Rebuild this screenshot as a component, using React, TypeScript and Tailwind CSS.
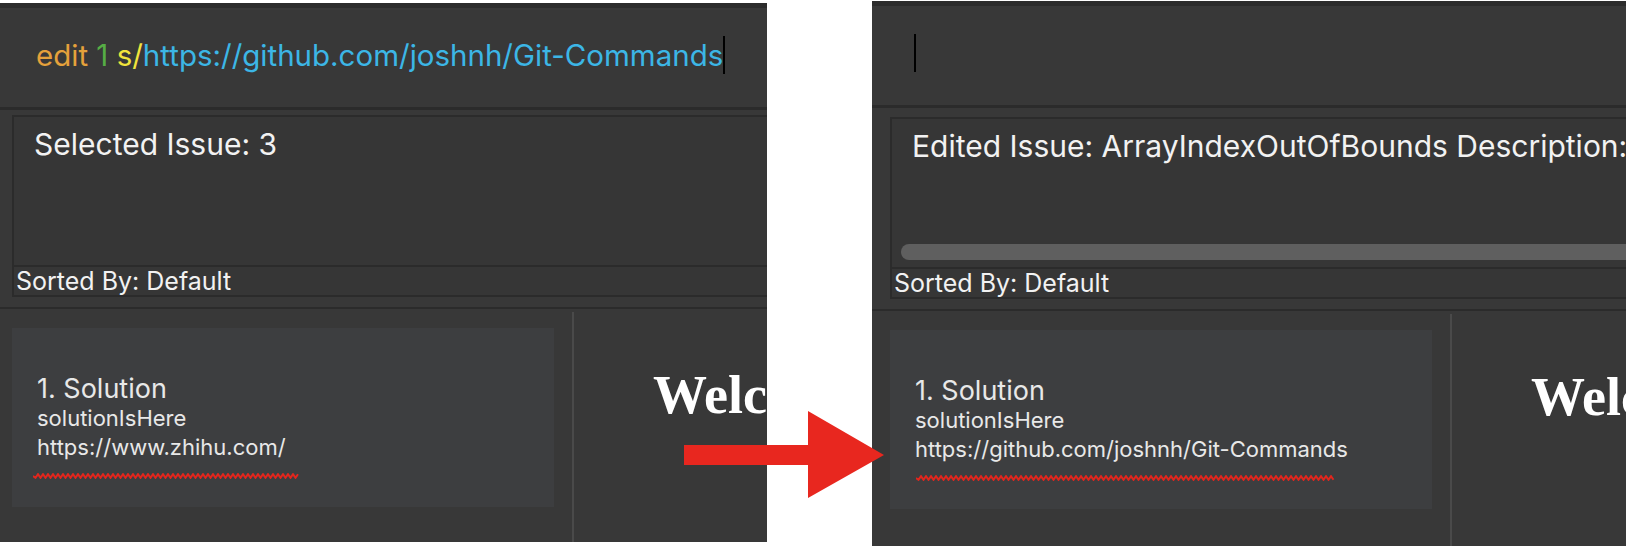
import React from 'react';

type Variant = 'before' | 'after';

function Squiggle({ width }: { width: number }) {
  let d = 'M0 3';
  for (let x = 2.5; x <= width; x += 2.5) d += ` L${x} ${Math.round(x / 2.5) % 2 === 0 ? 1.2 : 4.8}`;
  return (
    <svg width={width} height={6} className="block">
      <path d={d} stroke="#e2261d" strokeWidth="2" fill="none" />
    </svg>
  );
}

function Screen({ variant }: { variant: Variant }) {
  const after = variant === 'after';

  return (
    <div className="w-[900px] h-full flex flex-col bg-[#383838] font-['Inter',sans-serif] text-[#f2f2f2]">
      <div className="h-[5px] bg-[#2c2c2c]" />

      {/* command box */}
      <div className="h-[99px] flex items-start pt-[28px] pl-[42px]">
        {!after && (
          <span className="text-[29.5px] leading-[38px] whitespace-nowrap">
            <span className="text-[#e5a13b]">edit</span>{' '}
            <span className="text-[#56ad45]">1</span>{' '}
            <span className="text-[#f1e43c]">s/</span>
            <span className="text-[#3cb6e6]">https://github.com/joshnh/Git-Commands</span>
          </span>
        )}
        <div className="w-[2px] h-[38px] bg-black" />
      </div>
      <div className="h-[3px] bg-[#2b2b2b]" />

      {/* result display */}
      <div className={`pl-[18px] pb-[10px] ${after ? 'pt-[9px]' : 'pt-[5px]'}`}>
        <div className="w-[860px] border-2 border-[#2b2b2b] bg-[#363636]">
          <div className="h-[148px] flex flex-col pt-[9px]">
            <div className="pl-[20px] text-[30px] leading-[36px] whitespace-nowrap">
              {after ? 'Edited Issue: ArrayIndexOutOfBounds Description: issue about index bounds' : 'Selected Issue: 3'}
            </div>
            {after && <div className="mt-auto mb-[7px] ml-[9px] h-[16px] rounded-full bg-[#5f5f5f]" />}
          </div>
          <div className="border-t-2 border-[#2b2b2b] pl-[2px] text-[25px] leading-[28px]">Sorted By: Default</div>
        </div>
      </div>
      <div className="h-[2px] bg-[#2b2b2b]" />

      {/* list + browser */}
      <div className="flex-1 flex">
        <div className="w-[578px] shrink-0 pl-[18px] pt-[19px]">
          <div className="w-[542px] h-[179px] bg-[#3d3e40] pl-[25px] pt-[45px] text-[#e8e8e8]">
            <div className="text-[27px] leading-[31px]">1. Solution</div>
            <div className="text-[22px] leading-[29px]">solutionIsHere</div>
            <div className="text-[22px] leading-[29px] whitespace-nowrap">
              {after ? 'https://github.com/joshnh/Git-Commands' : 'https://www.zhihu.com/'}
            </div>
            <div className={`mt-[11px] ${after ? 'ml-[1px]' : '-ml-[4px]'}`}>
              <Squiggle width={after ? 419 : 266} />
            </div>
          </div>
        </div>
        <div className="w-[2px] shrink-0 mt-[3px] bg-[#4a4a4a]" />
        <div className="w-[320px] shrink-0 pl-[79px] pt-[56px]">
          <div className="font-['Liberation_Serif',serif] font-bold text-[54px] leading-[60px] text-white whitespace-nowrap">
            Welcome to Issue Tracker
          </div>
        </div>
      </div>
    </div>
  );
}

function Arrow() {
  return (
    <svg width={201} height={88} className="absolute left-[684px] top-[411px]">
      <polygon points="0,34 124,34 124,0 200,44 124,87 124,54 0,54" fill="#e8271f" />
    </svg>
  );
}

export default function App() {
  return (
    <div className="relative flex w-[1626px] h-[546px] bg-white overflow-hidden">
      <div className="w-[767px] shrink-0 h-[539px] mt-[3px] overflow-hidden">
        <div className="-ml-[6px] h-full">
          <Screen variant="before" />
        </div>
      </div>
      <div className="w-[105px] shrink-0" />
      <div className="flex-1 h-[545px] mt-[1px] overflow-hidden">
        <Screen variant="after" />
      </div>
      <Arrow />
    </div>
  );
}
